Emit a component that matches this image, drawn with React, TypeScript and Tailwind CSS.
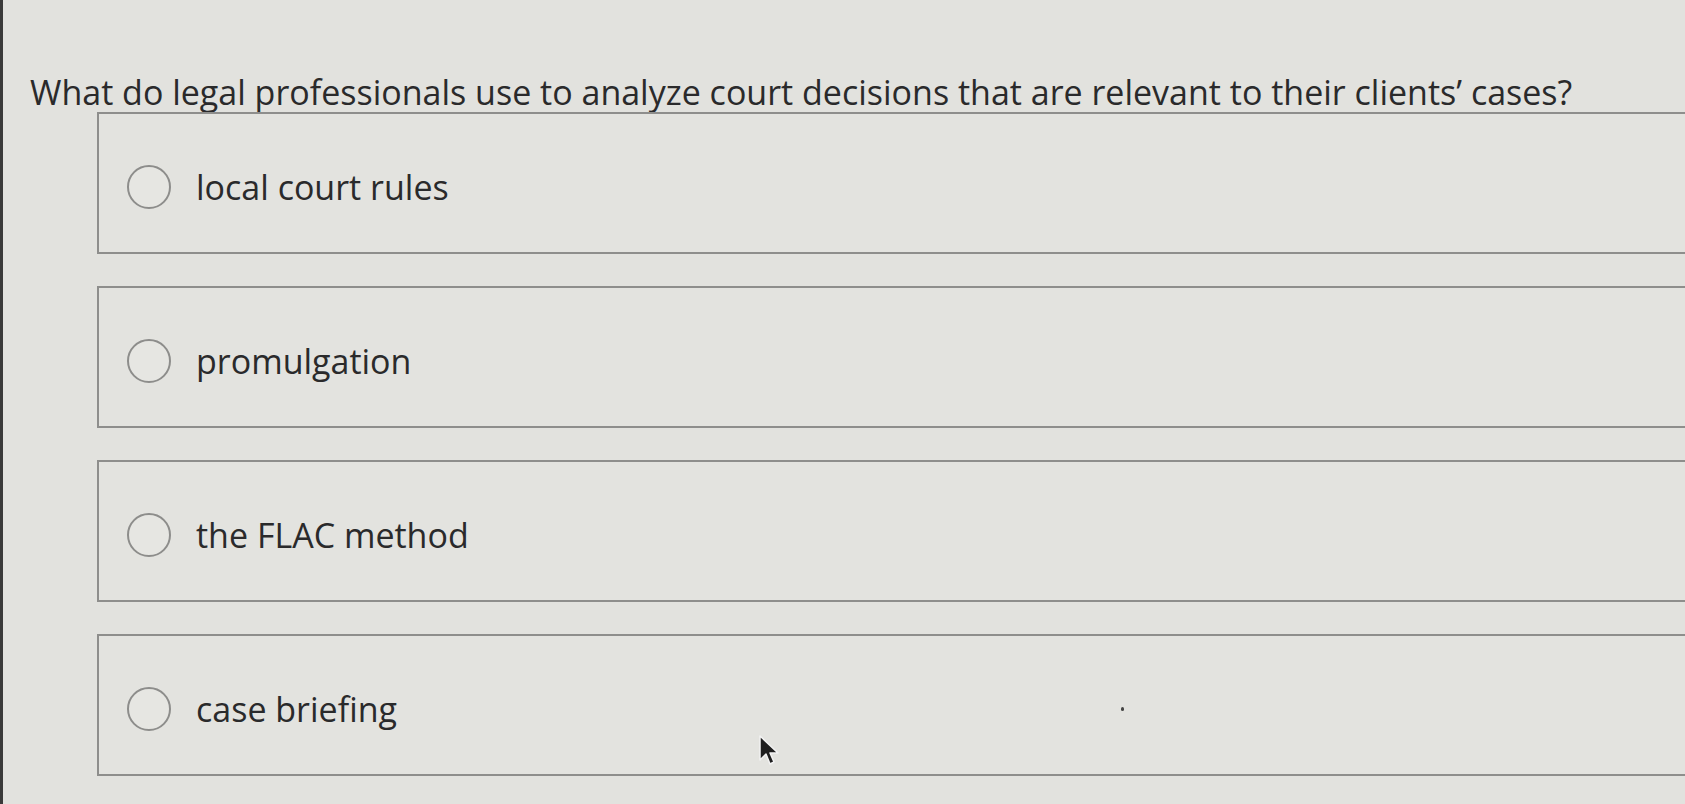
const options = ["local court rules", "promulgation", "the FLAC method", "case briefing"];

function Cursor() {
  return (
    <svg
      className="absolute left-[756px] top-[735px]"
      width="22"
      height="34"
      viewBox="0 0 22 34"
    >
      <path
        d="M1 1 L1 25 L7 19 L11 29 L15 27 L11 18 L19 18 Z"
        fill="#1f1f1f"
        stroke="#f2f2f2"
        strokeWidth="1.5"
        strokeLinejoin="round"
      />
    </svg>
  );
}

export default function App() {
  return (
    <div className="relative h-[804px] w-full overflow-hidden border-l-[3px] border-[#3a3a3a] bg-[#e2e2de] font-['Open_Sans',sans-serif] text-[#2a2a2b]">
      <h1 className="pl-[27px] pt-[72px] text-[34px] leading-[40px] font-normal">
        What do legal professionals use to analyze court decisions that are relevant to their clients’ cases?
      </h1>
      <div className="ml-[94px] flex flex-col gap-[32px]">
        {options.map((option) => (
          <label
            key={option}
            className="flex h-[142px] items-center gap-[25px] border-y-2 border-l-2 border-[#8e8e8c] bg-[#e3e3df] pl-[28px] pt-[8px]"
          >
            <span className="h-[44px] w-[44px] shrink-0 rounded-full border-2 border-[#8d8d8b] bg-[#e6e6e2]" />
            <span className="text-[34px] leading-none">{option}</span>
          </label>
        ))}
      </div>
      <span className="absolute left-[1118px] top-[707px] h-[4px] w-[3px] rounded-full bg-[#444]" />
      <Cursor />
    </div>
  );
}
